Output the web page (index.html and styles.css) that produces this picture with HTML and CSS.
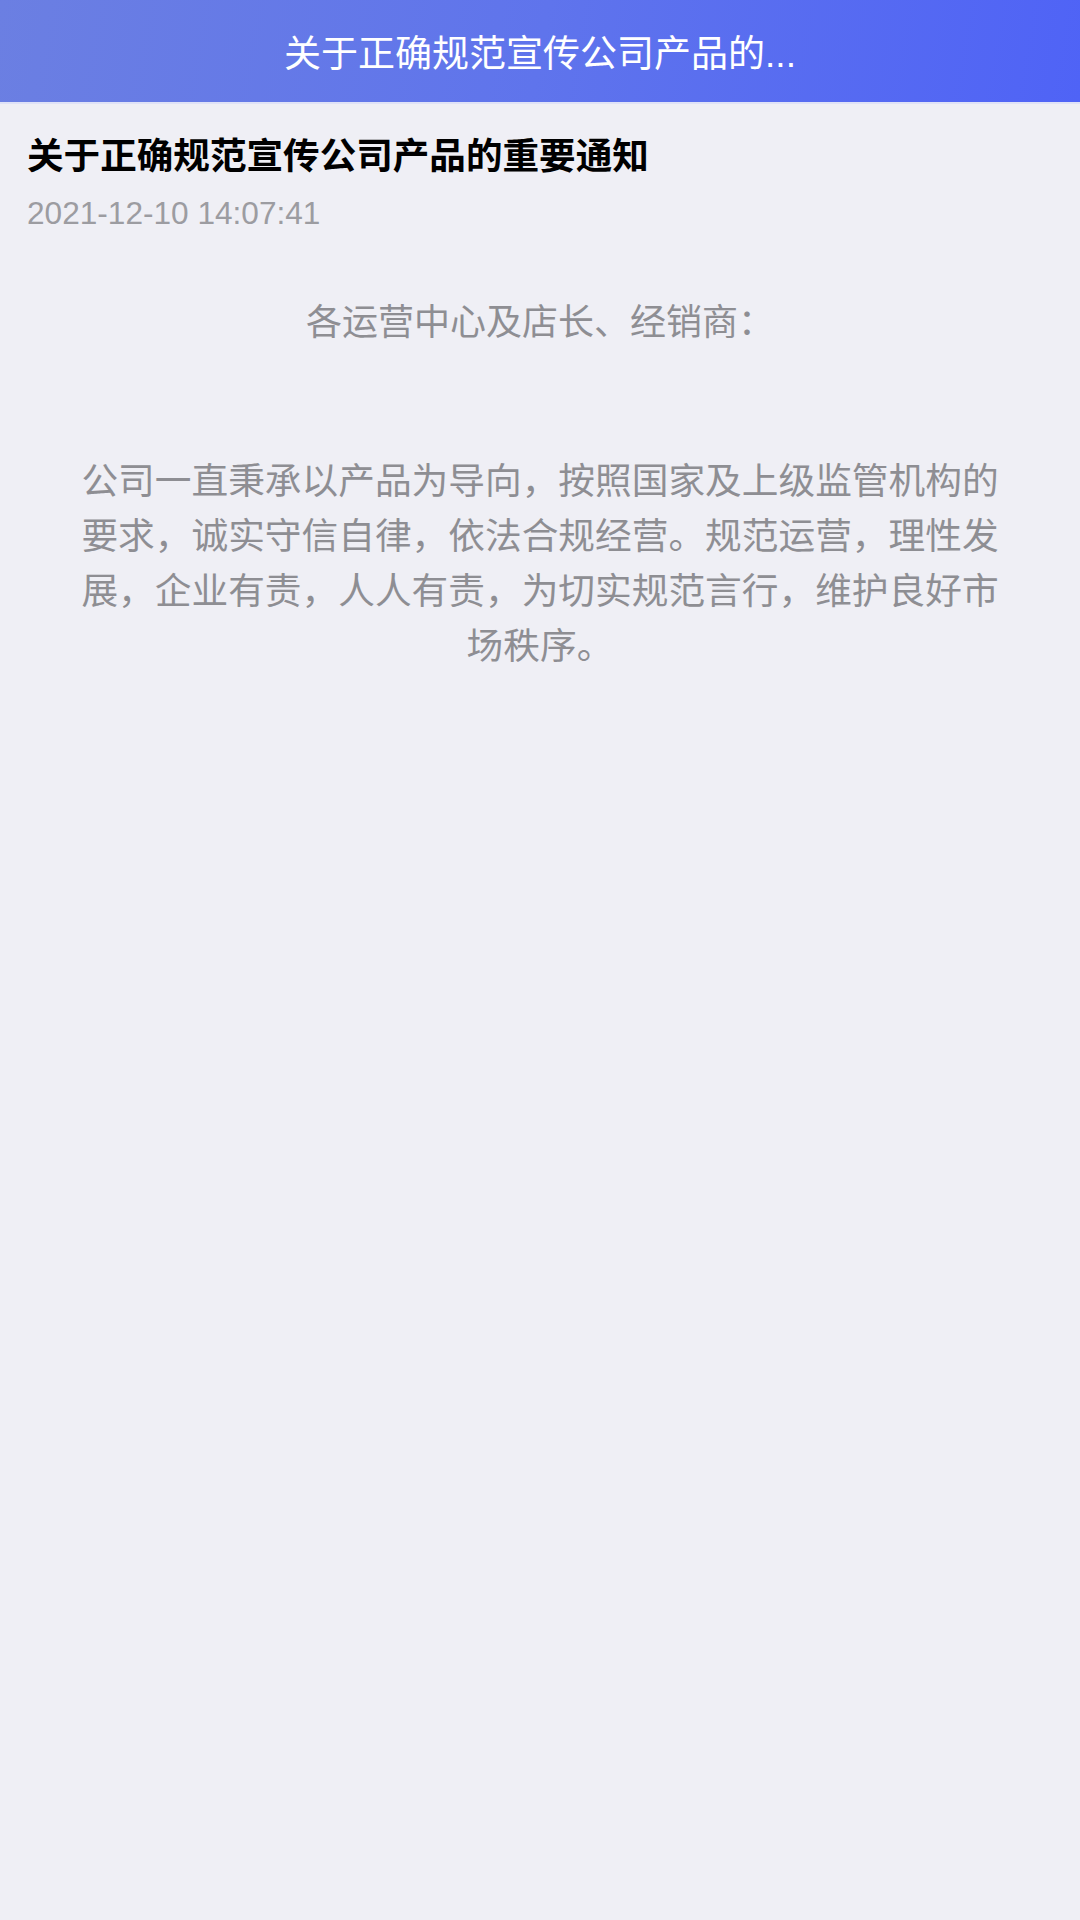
FILE: index.html
```html
<!DOCTYPE html>
<html lang="zh-CN">
<head>
    <meta charset="UTF-8">
    <meta name="viewport" content="width=device-width, initial-scale=1.0">
    <title>通知详情</title>
    <link rel="stylesheet" href="styles.css">
</head>
<body>
    <header class="nav-bar">
        <h1 class="nav-title">关于正确规范宣传公司产品的...</h1>
    </header>

    <main class="notice">
        <h2 class="notice-title">关于正确规范宣传公司产品的重要通知</h2>
        <div class="notice-time">2021-12-10 14:07:41</div>

        <div class="notice-body">
            <p class="greeting">各运营中心及店长、经销商：</p>
            <p class="para">公司一直秉承以产品为导向，按照国家及上级监管机构的要求，诚实守信自律，依法合规经营。规范运营，理性发展，企业有责，人人有责，为切实规范言行，维护良好市场秩序。</p>
        </div>
    </main>
</body>
</html>
```

FILE: styles.css
```css
*{
    margin: 0;
    padding: 0;
    box-sizing: border-box;
}
body{
    background-color: #efeff5;
    font-family: "Liberation Sans", "Noto Sans CJK SC", sans-serif;
    min-height: 1920px;
}
.nav-bar{
    height: 104px;
    background: linear-gradient(100deg, #6b7fe2 0%, #5f74ec 50%, #4f63f6 100%);
    display: flex;
    align-items: center;
    justify-content: center;
    border-bottom: 2px solid #dfe2f7;
}
.nav-title{
    color: #fff;
    font-size: 37px;
    font-weight: normal;
    white-space: nowrap;
}
.notice{
    padding: 0 27px;
}
.notice-title{
    margin-top: 29px;
    font-size: 36.6px;
    line-height: 48px;
    font-weight: bold;
    color: #000;
}
.notice-time{
    margin-top: 12px;
    font-size: 31.6px;
    line-height: 40px;
    color: #9c9ca1;
}
.notice-body{
    color: #8e8e93;
    font-size: 36px;
    line-height: 55px;
    text-align: center;
    padding: 0 46px;
}
.greeting{
    margin-top: 62px;
}
.para{
    margin-top: 104px;
    font-size: 36.7px;
}
```
